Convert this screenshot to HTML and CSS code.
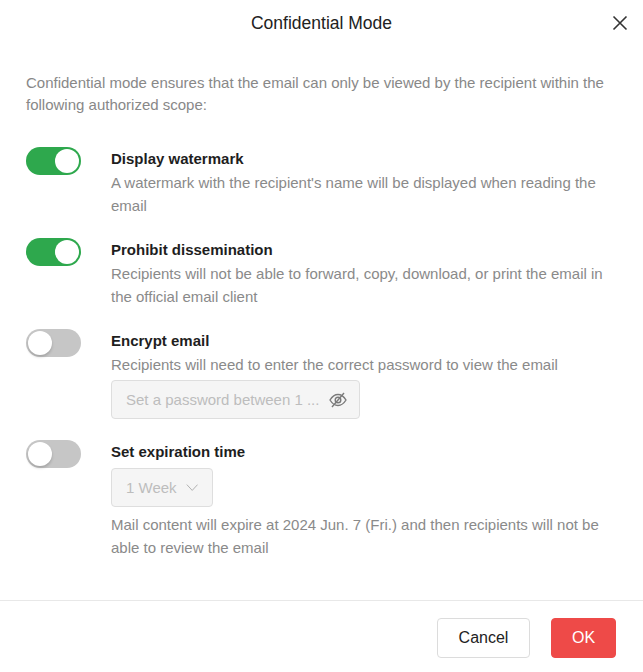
FILE: index.html
```html
<!DOCTYPE html>
<html lang="en">
<head>
<meta charset="utf-8">
<title>Confidential Mode</title>
<link rel="stylesheet" href="styles.css">
</head>
<body>
<div class="dialog">
  <header class="header">
    <span class="spacer"></span>
    <h1 class="title">Confidential Mode</h1>
    <button class="close" aria-label="Close">
      <svg width="16" height="16" viewBox="0 0 16 16"><path d="M1.5 1.5 L14.5 14.5 M14.5 1.5 L1.5 14.5" stroke="#333" stroke-width="1.6" fill="none"/></svg>
    </button>
  </header>

  <main class="body">
    <p class="intro">Confidential mode ensures that the email can only be viewed by the recipient within the following authorized scope:</p>

    <div class="options">
      <div class="option">
        <span class="toggle on"><span class="knob"></span></span>
        <div class="content">
          <div class="opt-title">Display watermark</div>
          <div class="opt-desc">A watermark with the recipient's name will be displayed when reading the email</div>
        </div>
      </div>

      <div class="option">
        <span class="toggle on"><span class="knob"></span></span>
        <div class="content">
          <div class="opt-title">Prohibit dissemination</div>
          <div class="opt-desc">Recipients will not be able to forward, copy, download, or print the email in the official email client</div>
        </div>
      </div>

      <div class="option">
        <span class="toggle"><span class="knob"></span></span>
        <div class="content">
          <div class="opt-title">Encrypt email</div>
          <div class="opt-desc">Recipients will need to enter the correct password to view the email</div>
          <div class="field password">
            <span class="placeholder">Set a password between 1 ...</span>
            <svg class="eye" width="20" height="20" viewBox="0 0 20 20">
              <path d="M2 10 C4.6 5.8 7.2 4.5 10 4.5 C12.8 4.5 15.4 5.8 18 10 C15.4 14.2 12.8 15.5 10 15.5 C7.2 15.5 4.6 14.2 2 10 Z" fill="none" stroke="#7a7a7a" stroke-width="1.4"/>
              <circle cx="10" cy="10" r="2.8" fill="none" stroke="#7a7a7a" stroke-width="1.4"/>
              <path d="M16 3 L4 17" stroke="#7a7a7a" stroke-width="1.4"/>
            </svg>
          </div>
        </div>
      </div>

      <div class="option">
        <span class="toggle"><span class="knob"></span></span>
        <div class="content">
          <div class="opt-title">Set expiration time</div>
          <div class="field select">
            <span class="placeholder">1 Week</span>
            <svg class="chev" width="15" height="9" viewBox="0 0 15 9"><path d="M1 1 L7.5 8 L14 1" fill="none" stroke="#b0b0b0" stroke-width="1.2"/></svg>
          </div>
          <div class="opt-desc expire">Mail content will expire at 2024 Jun. 7 (Fri.) and then recipients will not be able to review the email</div>
        </div>
      </div>
    </div>
  </main>

  <footer class="footer">
    <button class="btn cancel">Cancel</button>
    <button class="btn ok">OK</button>
  </footer>
</div>
</body>
</html>
```

FILE: styles.css
```css
* { box-sizing: border-box; }
html, body { margin: 0; padding: 0; background: #fff; }
body { font-family: "Liberation Sans", Arial, sans-serif; color: #222; }

.dialog {
  width: 643px;
  height: 672px;
  display: flex;
  flex-direction: column;
  background: #fff;
}

.header {
  height: 46px;
  display: grid;
  grid-template-columns: 1fr auto 1fr;
  align-items: center;
}
.title {
  margin: 0;
  font-size: 17.5px;
  font-weight: normal;
  line-height: 46px;
  color: #222;
}
.close {
  justify-self: end;
  margin-right: 15px;
  margin-top: -1px;
  width: 16px;
  height: 16px;
  padding: 0;
  border: 0;
  background: none;
  display: flex;
}

.body {
  flex: 1;
  padding: 26px 26px 0 26px;
}
.intro {
  margin: 0;
  font-size: 15px;
  line-height: 22px;
  color: #888;
}

.options {
  margin-top: 31px;
  display: flex;
  flex-direction: column;
  gap: 21px;
}
.option {
  display: grid;
  grid-template-columns: 55px 1fr;
  column-gap: 30px;
  align-items: start;
}

.toggle {
  position: relative;
  width: 55px;
  height: 28px;
  border-radius: 14px;
  background: #c6c6c6;
  display: block;
}
.toggle.on { background: #2ea84d; }
.knob {
  position: absolute;
  top: 2px;
  left: 2px;
  width: 24px;
  height: 24px;
  border-radius: 50%;
  background: #fff;
  box-shadow: 0 2px 3px rgba(0,0,0,0.18);
}
.toggle.on .knob { left: 29px; box-shadow: none; }

.opt-title {
  font-size: 15px;
  font-weight: bold;
  line-height: 24px;
  color: #1e1e1e;
}
.opt-desc {
  font-size: 15px;
  line-height: 23px;
  color: #8a8a8a;
}
.opt-desc.expire { margin-top: 6px; }

.field {
  margin-top: 4px;
  height: 39px;
  border: 1px solid #dedede;
  border-radius: 4px;
  background: #f5f5f5;
  display: flex;
  align-items: center;
  padding: 0 14px;
  font-size: 15px;
  color: #bdbdbd;
  white-space: nowrap;
}
.field.password { width: 249px; justify-content: space-between; }
.field.select { width: 102px; gap: 9px; }
.eye { margin-right: -3px; }

.footer {
  border-top: 1px solid #e8e8e8;
  padding: 17px 27px 14px 0;
  display: flex;
  justify-content: flex-end;
  gap: 21px;
}
.btn {
  height: 40px;
  border-radius: 4px;
  font-family: "Liberation Sans", Arial, sans-serif;
  font-size: 16px;
  padding: 0;
}
.cancel {
  width: 93px;
  background: #fff;
  border: 1px solid #dcdcdc;
  color: #222;
}
.ok {
  width: 65px;
  background: #ee4a48;
  border: 1px solid #ee4a48;
  color: #fff;
}
```
